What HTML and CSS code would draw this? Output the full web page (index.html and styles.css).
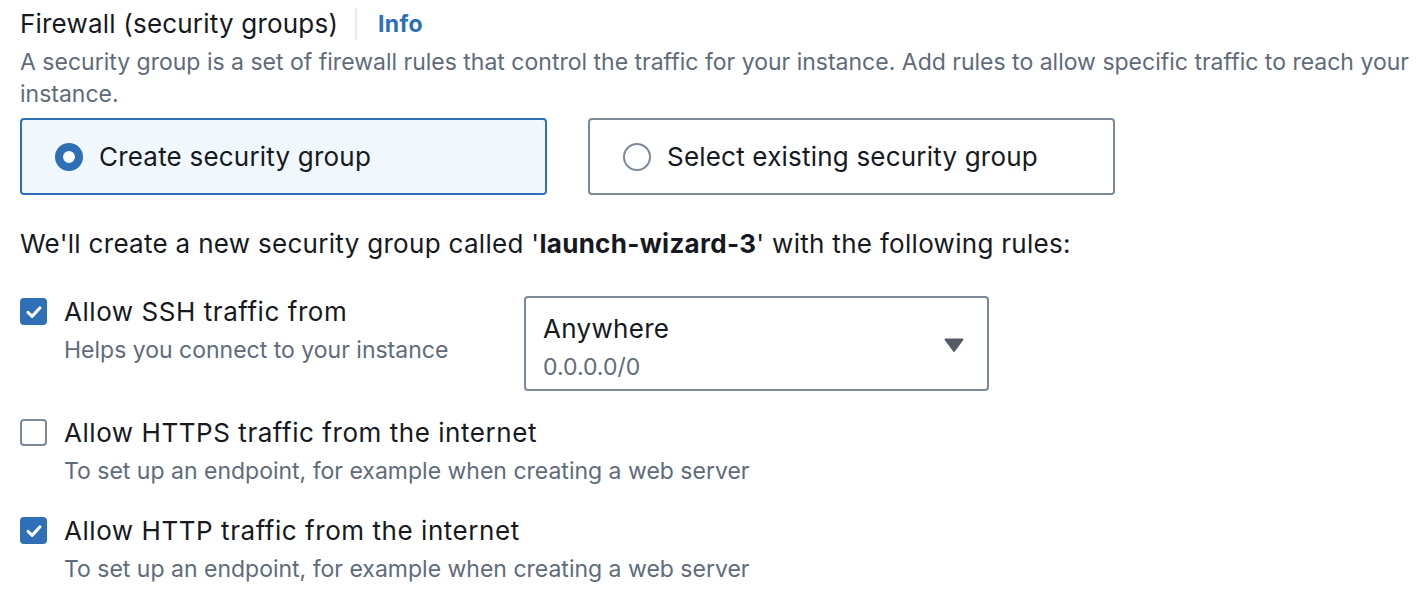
FILE: index.html
```html
<!DOCTYPE html>
<html lang="en">
<head>
<meta charset="utf-8">
<title>Firewall (security groups)</title>
<link rel="stylesheet" href="styles.css">
</head>
<body>
<section class="field">
  <div class="head">
    <span class="title">Firewall (security groups)</span>
    <span class="sep"></span>
    <a class="info" href="#">Info</a>
  </div>
  <p class="desc">A security group is a set of firewall rules that control the traffic for your instance. Add rules to allow specific traffic to reach your instance.</p>

  <div class="tiles">
    <label class="tile tile-on">
      <span class="radio radio-on"></span>
      <span class="tile-label">Create security group</span>
    </label>
    <label class="tile">
      <span class="radio"></span>
      <span class="tile-label">Select existing security group</span>
    </label>
  </div>

  <p class="intro">We'll create a new security group called '<b>launch-wizard-3</b>' with the following rules:</p>

  <div class="rules">
    <div class="rule">
      <div class="rule-main">
        <span class="check check-on"><svg viewBox="0 0 16 16" width="20" height="20"><path d="M3.2 8.3 6.5 11.5 12.8 4.6" fill="none" stroke="#fff" stroke-width="2.4" stroke-linecap="round" stroke-linejoin="round"/></svg></span>
        <div class="rule-text">
          <div class="rule-label">Allow SSH traffic from</div>
          <div class="rule-sub">Helps you connect to your instance</div>
        </div>
      </div>
      <div class="select">
        <div class="select-text">
          <div class="select-value">Anywhere</div>
          <div class="select-sub">0.0.0.0/0</div>
        </div>
        <svg class="caret" viewBox="0 0 22 16" width="22" height="16"><path d="M2.5 1.5h17a1 1 0 0 1 .8 1.6l-8.5 11.4a1 1 0 0 1-1.6 0L1.7 3.1a1 1 0 0 1 .8-1.6z" fill="#545b64"/></svg>
      </div>
    </div>

    <div class="rule">
      <div class="rule-main">
        <span class="check"></span>
        <div class="rule-text">
          <div class="rule-label">Allow HTTPS traffic from the internet</div>
          <div class="rule-sub">To set up an endpoint, for example when creating a web server</div>
        </div>
      </div>
    </div>

    <div class="rule">
      <div class="rule-main">
        <span class="check check-on"><svg viewBox="0 0 16 16" width="20" height="20"><path d="M3.2 8.3 6.5 11.5 12.8 4.6" fill="none" stroke="#fff" stroke-width="2.4" stroke-linecap="round" stroke-linejoin="round"/></svg></span>
        <div class="rule-text">
          <div class="rule-label">Allow HTTP traffic from the internet</div>
          <div class="rule-sub">To set up an endpoint, for example when creating a web server</div>
        </div>
      </div>
    </div>
  </div>
</section>
</body>
</html>
```

FILE: styles.css
```css
html, body {
  margin: 0;
  padding: 0;
  background: #ffffff;
}

body {
  font-family: Inter, "Noto Sans", sans-serif;
  color: #16191f;
}

.field {
  padding: 6px 0 0 20px;
  max-width: 1395px;
}

.head {
  display: flex;
  align-items: center;
  height: 36px;
}

.title {
  font-size: 26px;
  letter-spacing: 0.2px;
  line-height: 36px;
}

.sep {
  width: 2px;
  height: 32px;
  background: #e9ebed;
  margin: 0 21px 0 17px;
}

.info {
  font-size: 23px;
  font-weight: 700;
  letter-spacing: 0.3px;
  color: #2f6fb6;
  text-decoration: none;
}

.desc {
  margin: 4px 0 0;
  font-size: 23px;
  line-height: 32px;
  color: #5f6b7a;
}

.tiles {
  display: flex;
  gap: 41px;
  margin-top: 8px;
}

.tile {
  box-sizing: border-box;
  width: 527px;
  height: 77px;
  display: flex;
  align-items: center;
  gap: 16px;
  padding-left: 33px;
  border: 2px solid #7d8998;
  border-radius: 4px;
  background: #fff;
}

.tile-on {
  border-color: #2f6fb6;
  background: #f1f8fd;
}

.radio {
  box-sizing: border-box;
  width: 28px;
  height: 28px;
  border-radius: 50%;
  border: 2px solid #7d8998;
  background: #fff;
  flex: none;
}

.radio-on {
  border: 8px solid #2f6fb6;
}

.tile-label {
  font-size: 26px;
  letter-spacing: 0.2px;
  line-height: 36px;
}

.intro {
  margin: 31px 0 0;
  font-size: 26px;
  letter-spacing: 0.3px;
  line-height: 36px;
}

.intro b {
  font-weight: 700;
}

.rules {
  display: flex;
  flex-direction: column;
  gap: 22px;
  margin-top: 30px;
}

.rule {
  display: flex;
  align-items: flex-start;
  gap: 24px;
}

.rule-main {
  display: flex;
  align-items: flex-start;
  gap: 17px;
  width: 480px;
  flex: none;
}

.check {
  box-sizing: border-box;
  width: 27px;
  height: 27px;
  margin-top: 6px;
  border: 2px solid #7d8998;
  border-radius: 4px;
  background: #fff;
  flex: none;
  display: flex;
  align-items: center;
  justify-content: center;
}

.check-on {
  border-color: #2f6fb6;
  background: #2f6fb6;
}

.rule-label {
  font-size: 26px;
  letter-spacing: 0.55px;
  line-height: 40px;
  white-space: nowrap;
}

.rule-sub {
  font-size: 23px;
  line-height: 36px;
  color: #5f6b7a;
  white-space: nowrap;
}

.select {
  box-sizing: border-box;
  width: 465px;
  height: 95px;
  margin-top: 4px;
  border: 2px solid #7d8998;
  border-radius: 4px;
  display: flex;
  align-items: center;
  justify-content: space-between;
  padding: 0 22px 0 17px;
}

.select-text {
  align-self: flex-start;
  padding-top: 13px;
}

.select-value {
  font-size: 26px;
  letter-spacing: 0.3px;
  line-height: 36px;
}

.select-sub {
  font-size: 23px;
  line-height: 40px;
  color: #5f6b7a;
}

.caret {
  margin-top: 2px;
}
```
